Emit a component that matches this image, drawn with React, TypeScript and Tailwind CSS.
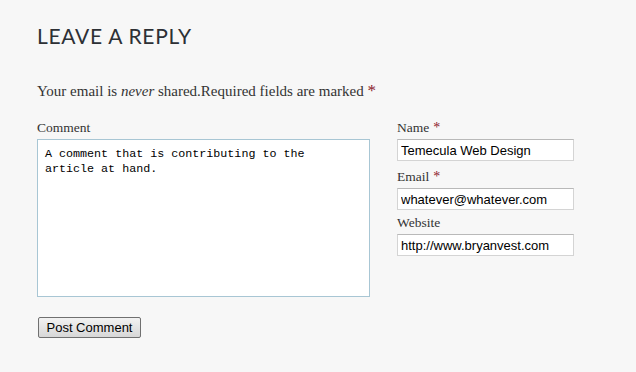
import React from "react";

const serif = "font-['Georgia','Liberation_Serif','DejaVu_Serif',serif]";
const arial = "font-['Liberation_Sans',Arial,sans-serif]";

function Field({ label, required, value, className }: { label: string; required?: boolean; value: string; className: string }) {
  return (
    <div className={className}>
      <label className={`${serif} block text-[13.5px] leading-[17px] text-[#333]`}>
        {label}
        {required && <span className="text-[#8b1a2b] ml-[4px] text-[14px]">*</span>}
      </label>
      <input
        type="text"
        defaultValue={value}
        className={`${arial} block mt-[3px] w-[177px] h-[22px] bg-white border border-[#d4d4d4] border-t-[#b9b9b9] px-[3px] text-[13px] text-black outline-none`}
      />
    </div>
  );
}

export default function App() {
  return (
    <div className="w-[636px] h-[372px] bg-[#f7f7f7] pl-[37px] pt-[24px] overflow-hidden">
      <h2 className="font-['Lato','Open_Sans',sans-serif] text-[21px] leading-[24px] tracking-[0.7px] text-[#2d3035] font-normal">
        LEAVE A REPLY
      </h2>

      <p className={`${serif} mt-[34px] text-[15px] leading-[18px] text-[#333]`}>
        Your email is <em>never</em> shared.Required fields are marked{" "}
        <span className="text-[#8b1a2b] text-[17px]">*</span>
      </p>

      <div className="flex gap-[27px] mt-[19px]">
        <div>
          <label className={`${serif} block text-[13.5px] leading-[17px] text-[#333]`}>Comment</label>
          <textarea
            defaultValue={"A comment that is contributing to the article at hand."}
            className="block mt-[3px] w-[333px] h-[158px] bg-white border border-[#a8c6d4] pl-[7px] pr-[40px] py-[7px] font-['Liberation_Mono','Courier_New',monospace] text-[11.7px] leading-[15px] text-black resize-none outline-none"
          />
        </div>

        <div>
          <Field label="Name" required value="Temecula Web Design" className="" />
          <Field label="Email" required value="whatever@whatever.com" className="mt-[7px]" />
          <Field label="Website" value="http://www.bryanvest.com" className="mt-[4px]" />
        </div>
      </div>

      <button
        className={`${arial} mt-[20px] ml-[1px] w-[103px] h-[21px] rounded-[2px] border border-[#707070] bg-gradient-to-b from-[#f2f2f2] to-[#d7d7d7] text-[13px] leading-[19px] text-black`}
      >
        Post Comment
      </button>
    </div>
  );
}
